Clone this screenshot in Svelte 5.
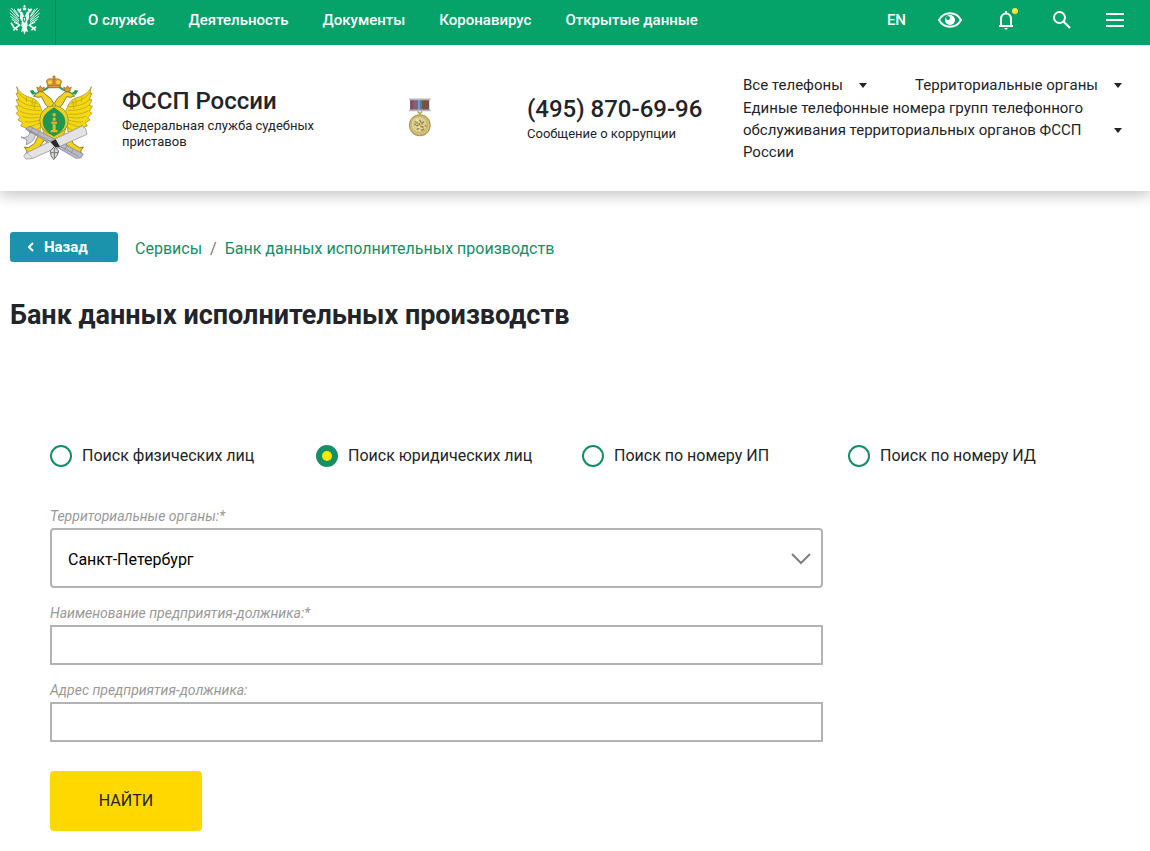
<script>
  const menu = ["О службе", "Деятельность", "Документы", "Коронавирус", "Открытые данные"];

  const searchTypes = [
    { id: "person", title: "Поиск физических лиц" },
    { id: "company", title: "Поиск юридических лиц" },
    { id: "ip", title: "Поиск по номеру ИП" },
    { id: "doc", title: "Поиск по номеру ИД" },
  ];

  const regions = ["Санкт-Петербург", "Москва", "Ленинградская область"];

  let searchType = "company";
  let region = regions[0];
  let companyName = "";
  let address = "";
</script>

<div class="topbar">
  <a href="#gerb" class="gerb" aria-label="Главная">
    <svg viewBox="26 13 94 94" width="31" height="31" fill="#effff7">
      <path d="M73 16v8M69 20h8" stroke="#effff7" stroke-width="3" />
      <path d="M67 24h12l-2 8h-8zM50 29l4-3 4 3 4-3 2 3-3 6h-8zM82 29l3-3 4 3 4-3 4 3-4 6h-8z" />
      <path d="M52 39c2-6 14-5 16 2l5 13 5-13c2-7 14-8 16-2l-5-1-3 5 1 13-6 10 2 13-10 12-10-12 2-13-6-10 1-13-3-5z" />
      <path
        d="M30 31l25 28M29 41l26 22M31 51l24 17M35 60l20 13M42 69l15 7M34 26l20 25M42 29l13 20M117 31L91 59M118 41L91 63M116 51L91 68M112 60L91 73M104 69l-15 7M112 26L92 51M104 29L91 49"
        stroke="#effff7"
        stroke-width="3"
        stroke-linecap="round"
      />
      <path
        d="M60 76l-16 11-6-5m6 5l-4 7m5-7l7 5M86 76l16 11 6-5m-6 5l4 7m-5-7l-7 5M40 82l-8-12"
        fill="none"
        stroke="#effff7"
        stroke-width="5"
      />
      <path d="M67 82h12l5 17-7-4-4 11-4-11-7 4z" />
      <path d="M68 52h10v12l-5 6-5-6z" fill="#05a26a" />
      <path d="M71 55h4v8h-4z" />
    </svg>
  </a>
  <nav>
    {#each menu as item}
      <a href="#menu">{item}</a>
    {/each}
  </nav>
  <div class="tools">
    <a href="#en">EN</a>
    <button aria-label="Версия для слабовидящих">
      <svg viewBox="0 0 24 18" width="24" height="18">
        <path d="M1 9c5-9 17-9 22 0-5 9-17 9-22 0z" fill="none" stroke="#fff" stroke-width="2" />
        <circle cx="12" cy="9" r="5" fill="#fff" />
        <circle cx="10" cy="7" r="2" fill="#05a26a" />
      </svg>
    </button>
    <button class="bell" aria-label="Уведомления">
      <svg viewBox="0 0 16 20" width="16" height="20">
        <path
          d="M1 16h14M3 16V9c0-3 2-5.500 5-5.500S13 6 13 9v7M8 3.500V1"
          fill="none"
          stroke="#fff"
          stroke-width="2"
        />
        <path d="M6 18h4l-2 2z" fill="#fff" />
      </svg>
      <span class="dot"></span>
    </button>
    <button aria-label="Поиск">
      <svg viewBox="0 0 18 18" width="18" height="18">
        <circle cx="6.500" cy="6.500" r="5.500" fill="none" stroke="#fff" stroke-width="2" />
        <path d="M10.500 10.500l6.500 6.500" stroke="#fff" stroke-width="2.200" />
      </svg>
    </button>
    <button aria-label="Меню">
      <svg viewBox="0 0 18 14" width="18" height="14">
        <path d="M0 1h18M0 7h18M0 13h18" stroke="#fff" stroke-width="2" />
      </svg>
    </button>
  </div>
</div>

<header>
  <svg class="emblem" viewBox="45 30 234 258" width="78" height="86">
    <!-- wings -->
    <g fill="#f5d90f" stroke="#9a8426" stroke-width="2">
      <path
        d="M50 65c8 20 26 28 46 34 18 6 24 20 32 44l-8 58-28 6-14-18-16-6 6-10-14-8 6-8-12-12 8-6-9-15 9-3-8-17 9 0-9-19 6 0z"
      />
      <path
        d="M274 65c-8 20-26 28-46 34-18 6-24 20-32 44l8 58 28 6 14-18 16-6-6-10 14-8-6-8 12-12-8-6 9-15-9-3 8-17-9 0 9-19-6 0z"
      />
    </g>
    <g fill="none" stroke="#b39a25" stroke-width="2">
      <path
        d="M54 82c15 20 34 26 58 34M53 102c20 18 38 22 66 23M56 120c20 14 40 17 64 16M60 138c18 10 36 11 58 9M67 154c16 6 30 6 49 3M75 170c15 3 25 0 42-4M83 187l38-13M97 202l28-17M78 94l2 17M97 102l-1 20M106 107l-4 26"
      />
      <path
        d="M270 82c-15 20-34 26-58 34M271 102c-20 18-38 22-66 23M268 120c-20 14-40 17-64 16M264 138c-18 10-36 11-58 9M257 154c-16 6-30 6-49 3M249 170c-15 3-25 0-42-4M241 187l-38-13M227 202l-28-17M246 94l-2 17M227 102l1 20M218 107l4 26"
      />
    </g>
    <!-- heads and crowns -->
    <path
      d="M94 82c12 3 16 8 26-4 12-2 18-4 25-12l17-4 17 4c7 8 13 10 25 12 10 12 14 7 26 4"
      fill="none"
      stroke="#35a267"
      stroke-width="6"
    />
    <path d="M89 77l10-2 7 9-8 6zM235 77l-10-2-7 9 8 6z" fill="#259b59" />
    <g fill="#f0d322" stroke="#92812b" stroke-width="3">
      <path d="M138 90c-8-14-24-11-30-2l-8 5 14 4 10-2 12 22 15 18 10-20-10-16z" />
      <path d="M186 90c8-14 24-11 30-2l8 5-14 4-10-2-12 22-15 18-10-20 10-16z" />
    </g>
    <g fill="#e29a35" stroke="#8d6b24" stroke-width="2">
      <path d="M110 66l7 4 4-8 5 8 7-4-4 13h-15zM214 66l-7 4-4-8-5 8-7-4 4 13h15z" />
      <path d="M139 48c5-10 16-7 21-5 6-3 20-3 25 6l-6 19h-34z" />
      <path d="M159 33h6v11h-6zM145 61h34v7h-34z" />
    </g>
    <circle cx="150" cy="52" r="6" fill="#f3d83d" />
    <circle cx="174" cy="52" r="6" fill="#f3d83d" />
    <path d="M158 44h8v15h-8z" fill="#d77a3b" />
    <!-- legs and tail -->
    <path d="M126 185h73l-16 55-20 18-22-18z" fill="#e7ca20" stroke="#8d7e34" stroke-width="2" />
    <g fill="#f2d318" stroke="#927d24" stroke-width="3">
      <path d="M115 211l-12 25-18 12-12-2 8 12-4 13 13-8 13 7 5-11 27-36z" />
      <path d="M208 211l12 25 18 12 12-2-8 12 4 13-13-8-13 7-5-11-27-36z" />
    </g>
    <!-- shield -->
    <circle cx="162" cy="165" r="43" fill="#ecd01f" stroke="#857728" stroke-width="2" />
    <path d="M162 127c15 12 34 20 34 43 0 22-18 34-34 45-16-11-34-23-34-45 0-23 19-31 34-43z" fill="#21964f" />
    <path d="M158 145h9v9h-9zM158 158h9v9h-9zM154 170h17v6h-17zM158 178h9v17h-9zM152 195h21v7h-21z" fill="#edb620" />
    <!-- fasces, axe and scroll -->
    <path d="M76 192l14-8 160 83-8 12-14 1z" fill="#b8b9c4" stroke="#7c7c88" stroke-width="2" />
    <path d="M79 191l156 82M98 189l-8 13M118 200l-8 13M201 243l-8 13M220 253l-8 13" fill="none" stroke="#858592" stroke-width="2" />
    <path d="M91 201c-2 11-13 20-28 15l18 9-2 14c18-7 25-16 27-30z" fill="#d3d3db" stroke="#74747d" stroke-width="2" />
    <path d="M77 265l169-83 11 9 4 17L96 281l-18 1-7-8z" fill="#e3e3e6" stroke="#8a8a8a" stroke-width="2" />
    <path d="M77 265c8-3 17 10 19 16M83 262l165-79" fill="none" stroke="#aaaab0" stroke-width="2" />
    <path d="M151 231l16-8 13 22-15 2z" fill="#292b30" />
    <path d="M151 257l12-12 13 13-5 14-10 12-8-12z" fill="#d8d8d6" stroke="#716f6c" stroke-width="3" />
    <path d="M163 249v30M151 263h25" stroke="#777" stroke-width="3" />
  </svg>

  <div class="brand">
    <strong>ФССП России</strong>
    <span>Федеральная служба судебных приставов</span>
  </div>

  <svg class="medal" viewBox="36 24 68 116" width="23" height="39">
    <path d="M42 29h57v31H42z" fill="#74506a" />
    <path d="M51 29h10v31H51z" fill="#a85265" />
    <path d="M61 29h17v31H61z" fill="#527aa9" />
    <path d="M67 29h3v31h-3z" fill="#a0b4d0" />
    <path d="M78 29h15v31H78z" fill="#77523f" />
    <path d="M39 28h64M39 61h64" stroke="#b5b6b5" stroke-width="5" />
    <path d="M64 64l7 7 7-7" fill="none" stroke="#b69c47" stroke-width="4" />
    <circle cx="71" cy="105" r="31" fill="#d1bf79" stroke="#ad9653" stroke-width="3" />
    <circle cx="69" cy="103" r="24" fill="#ddd197" stroke="#c0a85e" stroke-width="2" />
    <path
      d="M56 94l9 5M70 89l6 8M83 94l-7 8M60 107l8-3M73 108l9 3M62 118l7-5M75 121l9-5M54 101l5 3M86 105l5 4M68 99l4 5"
      fill="none"
      stroke="#9a843d"
      stroke-width="4"
    />
    <path d="M60 88l6 3M65 109l5 3" stroke="#f4e8ac" stroke-width="4" />
  </svg>

  <div class="phone">
    <strong>(495) 870-69-96</strong>
    <a href="#corruption">Сообщение о коррупции</a>
  </div>

  <div class="contacts">
    <a href="#phones">Все телефоны <i></i></a>
    <a href="#organs">Территориальные органы <i></i></a>
    <a href="#groups" class="wide">
      <span>Единые телефонные номера групп телефонного обслуживания территориальных органов ФССП России</span>
      <i></i>
    </a>
  </div>
</header>

<main>
  <div class="crumbs">
    <button class="back">
      <svg viewBox="0 0 6 10" width="6" height="10">
        <path d="M5 1L1 5l4 4" fill="none" stroke="#fff" stroke-width="2" />
      </svg>
      Назад
    </button>
    <div class="path">
      <a href="#services">Сервисы</a>
      <span>/</span>
      <a href="#bank">Банк данных исполнительных производств</a>
    </div>
  </div>

  <h1>Банк данных исполнительных производств</h1>

  <form on:submit|preventDefault>
    <div class="types">
      {#each searchTypes as type}
        <label>
          <input type="radio" name="type" value={type.id} bind:group={searchType} />
          {type.title}
        </label>
      {/each}
    </div>

    <div class="field">
      <label for="region">Территориальные органы:*</label>
      <div class="select">
        <select id="region" bind:value={region}>
          {#each regions as item}
            <option value={item}>{item}</option>
          {/each}
        </select>
        <svg viewBox="0 0 20 12" width="20" height="12">
          <path d="M1 1l9 9 9-9" fill="none" stroke="#808080" stroke-width="2" />
        </svg>
      </div>
    </div>
    <div class="field">
      <label for="company">Наименование предприятия-должника:*</label>
      <input id="company" type="text" bind:value={companyName} />
    </div>
    <div class="field">
      <label for="address">Адрес предприятия-должника:</label>
      <input id="address" type="text" bind:value={address} />
    </div>

    <button class="submit">НАЙТИ</button>
  </form>
</main>

<style>
  :global(body) {
    margin: 0;
    background: #fff;
    color: #212529;
    font: 16px/22px Roboto, "Liberation Sans", sans-serif;
  }

  a {
    color: inherit;
    text-decoration: none;
  }

  button {
    padding: 0;
    border: 0;
    background: none;
    color: inherit;
    font: inherit;
    cursor: pointer;
  }

  svg {
    display: block;
    flex: none;
  }

  .topbar {
    position: relative;
    display: flex;
    height: 45px;
    background: #05a26a;
    color: #fff;
    font-size: 15px;
    font-weight: 500;
  }

  .gerb {
    box-sizing: border-box;
    width: 56px;
    padding: 4px 0 0 9px;
    border-right: 1px solid #078457;
  }

  nav {
    display: flex;
    gap: 34px;
    padding: 9px 0 0 32px;
  }

  .tools {
    display: flex;
    align-items: center;
    gap: 32px;
    height: 40px;
    margin-left: auto;
    padding-right: 26px;
  }

  .tools button {
    display: flex;
    justify-content: center;
    width: 24px;
  }

  .tools button:last-child {
    width: 18px;
  }

  .bell {
    position: relative;
  }

  .dot {
    position: absolute;
    top: -2px;
    right: 0;
    width: 6px;
    height: 6px;
    border-radius: 50%;
    background: #ffe24a;
  }

  header {
    display: grid;
    grid-template-columns: 107px 286px 119px 216px 1fr;
    height: 146px;
    padding: 0 28px 0 15px;
    box-shadow: 0 4px 14px rgba(0, 0, 0, 0.24);
  }

  .emblem {
    margin-top: 30px;
  }

  .brand {
    width: 200px;
    padding-top: 42px;
  }

  .brand strong,
  .phone strong {
    display: block;
    font-size: 24px;
    font-weight: 500;
    line-height: 28px;
  }

  .brand span,
  .phone a {
    display: block;
    margin-top: 3px;
    font-size: 13px;
    line-height: 16px;
  }

  .medal {
    margin-top: 53px;
  }

  .phone {
    padding-top: 50px;
  }

  .contacts {
    display: flex;
    flex-wrap: wrap;
    justify-content: space-between;
    align-content: flex-start;
    row-gap: 1px;
    padding-top: 29px;
    font-size: 15px;
  }

  .contacts a {
    display: flex;
    align-items: center;
    gap: 16px;
  }

  .contacts .wide {
    width: 100%;
    justify-content: space-between;
  }

  i {
    flex: none;
    border: 4px solid transparent;
    border-top: 5px solid #212529;
    border-bottom: 0;
  }

  main {
    padding: 41px 10px 20px;
  }

  .crumbs {
    display: flex;
    align-items: center;
    gap: 17px;
  }

  .path {
    display: flex;
    gap: 8px;
    padding-top: 4px;
    color: #168e63;
  }

  .path span {
    color: #777;
  }

  .back {
    display: flex;
    align-items: center;
    gap: 10px;
    width: 108px;
    height: 30px;
    padding-left: 18px;
    border-radius: 3px;
    background: #1b93ad;
    color: #fff;
    font-size: 15px;
    font-weight: 700;
  }

  h1 {
    margin: 36px 0 113px;
    font-size: 27px;
    font-weight: 700;
    line-height: 34px;
  }

  form {
    padding: 0 26px 0 40px;
  }

  .types {
    display: grid;
    grid-template-columns: repeat(4, 1fr);
    margin-bottom: 41px;
  }

  .types label {
    display: flex;
    align-items: center;
    gap: 10px;
  }

  .types input {
    appearance: none;
    box-sizing: border-box;
    width: 22px;
    height: 22px;
    margin: 0;
    border: 2px solid #168f67;
    border-radius: 50%;
  }

  .types input:checked {
    border-width: 6px;
    background: #ffe900;
  }

  .field {
    max-width: 773px;
    margin-bottom: 17px;
  }

  .field label {
    display: block;
    padding-bottom: 4px;
    color: #999;
    font-size: 14px;
    font-style: italic;
    line-height: 16px;
  }

  .field input,
  select {
    display: block;
    box-sizing: border-box;
    width: 100%;
    height: 40px;
    padding: 0 16px;
    border: 2px solid #b3b3b3;
    background: #fff;
    color: #000;
    font: inherit;
  }

  select {
    appearance: none;
    height: 60px;
    padding-top: 4px;
    border-radius: 4px;
  }

  .select {
    position: relative;
  }

  .select svg {
    position: absolute;
    top: 25px;
    right: 12px;
    pointer-events: none;
  }

  .submit {
    width: 152px;
    height: 60px;
    margin-top: 12px;
    border-radius: 4px;
    background: #ffd800;
    color: #212529;
  }
</style>
